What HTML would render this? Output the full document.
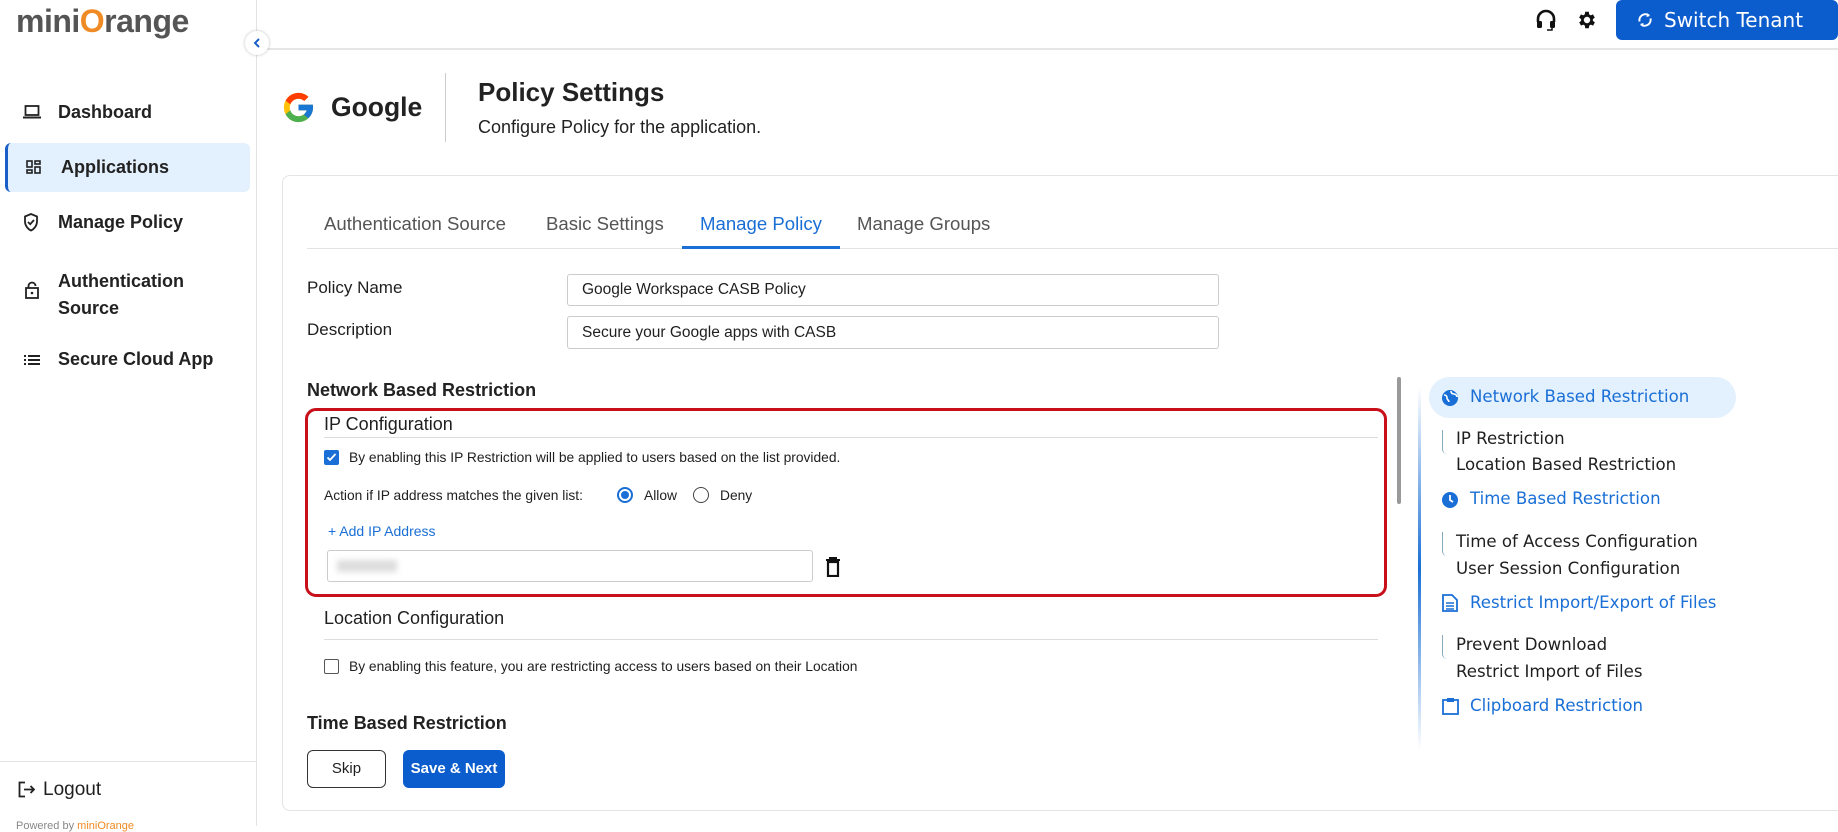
<!DOCTYPE html>
<html><head><meta charset="utf-8"><style>
*{box-sizing:border-box;margin:0;padding:0}
body{width:1838px;height:826px;overflow:hidden;background:#fff;font-family:"Liberation Sans",sans-serif;color:#1f1f1f;position:relative}
.a{position:absolute;white-space:nowrap}
.side{position:absolute;left:0;top:0;width:257px;height:826px;border-right:1px solid #e3e3e3;background:#fff}
.nav{font-size:18px;font-weight:bold;color:#222}
.r{font-family:"DejaVu Sans",sans-serif;font-size:16.6px}
.blue{color:#1a6fd6}
.t{font-size:18.6px;color:#555}
</style></head><body>
<div class="side"></div>
<div class="a" style="left:16px;top:3px;font-size:32px;font-weight:bold;color:#555;letter-spacing:-0.5px">mini<span style="color:#f08a24">O</span>range</div>
<div class="a" style="left:257px;top:48px;width:1581px;height:2px;background:#e6e6e6"></div>
<div class="a" style="left:245px;top:31px;width:24px;height:24px;border-radius:50%;background:#fff;box-shadow:0 0 3px rgba(0,0,0,.25)"></div>
<svg class="a" style="left:251px;top:37px" width="12" height="12" viewBox="0 0 12 12"><path d="M8 2L4 6l4 4" stroke="#1a5fc8" stroke-width="2" fill="none"/></svg>

<svg class="a" style="left:23px;top:105px" width="18" height="14" viewBox="0 0 18 14"><rect x="2.5" y="1" width="13" height="9" fill="none" stroke="#222" stroke-width="1.8"/><path d="M0 12.5h18" stroke="#222" stroke-width="2"/></svg>
<div class="a nav" style="left:58px;top:102px">Dashboard</div>
<div class="a" style="left:5px;top:143px;width:245px;height:49px;background:#e3f0fd;border-left:3px solid #1a5fc8;border-radius:6px"></div>
<svg class="a" style="left:26px;top:160px" width="15" height="16" viewBox="0 0 15 16"><g fill="none" stroke="#222" stroke-width="1.6"><rect x="1" y="1" width="5" height="6"/><rect x="9" y="1" width="5" height="3"/><rect x="1" y="10" width="5" height="3"/><rect x="9" y="7" width="5" height="6"/></g></svg>
<div class="a nav" style="left:61px;top:157px">Applications</div>
<svg class="a" style="left:23px;top:213px" width="16" height="19" viewBox="0 0 16 19"><path d="M8 1L2 3.5v5c0 4 2.7 7.5 6 9 3.3-1.5 6-5 6-9v-5z" fill="none" stroke="#222" stroke-width="1.8"/><path d="M5 9l2.2 2.2L11 7" fill="none" stroke="#222" stroke-width="1.8"/></svg>
<div class="a nav" style="left:58px;top:212px">Manage Policy</div>
<svg class="a" style="left:25px;top:281px" width="14" height="18" viewBox="0 0 14 18"><rect x="1" y="7" width="12" height="10" fill="none" stroke="#222" stroke-width="1.8"/><path d="M3.5 7V5a3.5 3.5 0 017 0" fill="none" stroke="#222" stroke-width="1.8"/><circle cx="7" cy="12" r="1.3" fill="#222"/></svg>
<div class="a nav" style="left:58px;top:268px;line-height:27px">Authentication<br>Source</div>
<svg class="a" style="left:24px;top:354px" width="16" height="12" viewBox="0 0 16 12"><g fill="#222"><rect x="0" y="1" width="2" height="2"/><rect x="0" y="5" width="2" height="2"/><rect x="0" y="9" width="2" height="2"/><rect x="4" y="1" width="12" height="2"/><rect x="4" y="5" width="12" height="2"/><rect x="4" y="9" width="12" height="2"/></g></svg>
<div class="a nav" style="left:58px;top:349px">Secure Cloud App</div>
<div class="a" style="left:0;top:761px;width:257px;height:1px;background:#e3e3e3"></div>
<svg class="a" style="left:18px;top:781px" width="17" height="17" viewBox="0 0 17 17"><path d="M7 1.5H1.5v14H7M6 8.5h10M12.5 5l3.5 3.5-3.5 3.5" fill="none" stroke="#222" stroke-width="1.8"/></svg>
<div class="a" style="left:43px;top:779px;font-size:19px">Logout</div>
<div class="a" style="left:16px;top:820px;font-size:11px;color:#888">Powered by <span style="color:#f08a24">miniOrange</span></div>

<svg class="a" style="left:1535px;top:9px" width="22" height="22" viewBox="0 0 22 22"><path d="M3 13V10a8 8 0 0116 0v3" fill="none" stroke="#111" stroke-width="2.6"/><rect x="2" y="12" width="5" height="7" rx="1.5" fill="#111"/><rect x="15" y="12" width="5" height="7" rx="1.5" fill="#111"/><path d="M17 19v2h-5" stroke="#111" stroke-width="1.5" fill="none"/></svg>
<svg class="a" style="left:1576px;top:9px" width="22" height="22" viewBox="0 0 24 24"><path fill="#111" d="M19.4 13a7.5 7.5 0 000-2l2.1-1.6-2-3.5-2.5 1a7.6 7.6 0 00-1.7-1L15 3h-4l-.4 2.9a7.6 7.6 0 00-1.7 1l-2.5-1-2 3.5L6.6 11a7.5 7.5 0 000 2l-2.1 1.6 2 3.5 2.5-1a7.6 7.6 0 001.7 1L11 21h4l.4-2.9a7.6 7.6 0 001.7-1l2.5 1 2-3.5zM13 15.5a3.5 3.5 0 110-7 3.5 3.5 0 010 7z" transform="translate(-1 0)"/></svg>
<div class="a" style="left:1616px;top:0;width:222px;height:40px;background:#0b5ccc;border-radius:6px;color:#fff;font-family:'DejaVu Sans',sans-serif;font-size:20px;line-height:40px;padding-left:48px">Switch Tenant</div>
<svg class="a" style="left:1636px;top:11px" width="18" height="18" viewBox="0 0 18 18"><path d="M3.5 10.5a6 6 0 019.5-6M14.5 7.5a6 6 0 01-9.5 6" fill="none" stroke="#fff" stroke-width="2"/><path d="M11 2l3 3-3.5 1zM7 16l-3-3 3.5-1z" fill="#fff"/></svg>

<svg class="a" style="left:281px;top:90px" width="35" height="35" viewBox="0 0 48 48"><path fill="#FFC107" d="M43.6 20H24v8h11.3C33.7 32.7 29.2 36 24 36c-6.6 0-12-5.4-12-12s5.4-12 12-12c3.1 0 5.8 1.2 7.9 3.1l5.7-5.7C34 6.1 29.3 4 24 4 13 4 4 13 4 24s9 20 20 20 20-9 20-20c0-1.3-.1-2.7-.4-4z"/><path fill="#FF3D00" d="M6.3 14.7l6.6 4.8C14.7 15.1 19 12 24 12c3.1 0 5.8 1.2 7.9 3.1l5.7-5.7C34 6.1 29.3 4 24 4 16.3 4 9.7 8.3 6.3 14.7z"/><path fill="#4CAF50" d="M24 44c5.2 0 9.9-2 13.4-5.2l-6.2-5.2C29.2 35.1 26.7 36 24 36c-5.2 0-9.6-3.3-11.3-8l-6.5 5C9.5 39.6 16.2 44 24 44z"/><path fill="#1976D2" d="M43.6 20H24v8h11.3c-.8 2.2-2.2 4.2-4.1 5.6l6.2 5.2C37 39.2 44 34 44 24c0-1.3-.1-2.7-.4-4z"/></svg>
<div class="a" style="left:331px;top:92px;font-size:26.5px;font-weight:bold;color:#222">Google</div>
<div class="a" style="left:445px;top:73px;width:1px;height:69px;background:#ccc"></div>
<div class="a" style="left:478px;top:77px;font-size:26px;font-weight:bold;color:#222">Policy Settings</div>
<div class="a" style="left:478px;top:117px;font-size:18px;color:#222">Configure Policy for the application.</div>

<div class="a" style="left:282px;top:175px;width:1570px;height:636px;border:1px solid #e4e4e4;border-radius:8px"></div>
<div class="a t" style="left:324px;top:213px">Authentication Source</div>
<div class="a t" style="left:546px;top:213px">Basic Settings</div>
<div class="a t" style="left:700px;top:213px;color:#1a6fd6">Manage Policy</div>
<div class="a t" style="left:857px;top:213px">Manage Groups</div>
<div class="a" style="left:307px;top:248px;width:1531px;height:1px;background:#e3e3e3"></div>
<div class="a" style="left:682px;top:246px;width:158px;height:3px;background:#1a6fd6"></div>

<div class="a" style="left:307px;top:278px;font-size:17px">Policy Name</div>
<div class="a" style="left:567px;top:274px;width:652px;height:32px;border:1px solid #ccc;border-radius:3px;font-size:15.5px;line-height:30px;padding-left:14px">Google Workspace CASB Policy</div>
<div class="a" style="left:307px;top:320px;font-size:17px">Description</div>
<div class="a" style="left:567px;top:316px;width:652px;height:33px;border:1px solid #ccc;border-radius:3px;font-size:15.5px;line-height:31px;padding-left:14px">Secure your Google apps with CASB</div>

<div class="a" style="left:307px;top:380px;font-size:18px;font-weight:bold;color:#222">Network Based Restriction</div>
<div class="a" style="left:305px;top:408px;width:1082px;height:189px;border:3px solid #c8101a;border-radius:11px"></div>
<div class="a" style="left:324px;top:414px;font-size:18px">IP Configuration</div>
<div class="a" style="left:324px;top:437px;width:1054px;height:1px;background:#ddd"></div>
<div class="a" style="left:324px;top:450px;width:15px;height:15px;background:#1a6fd6;border-radius:2px"></div>
<svg class="a" style="left:326px;top:452px" width="11" height="11" viewBox="0 0 11 11"><path d="M1.5 5.5l2.5 2.5 5.5-6" stroke="#fff" stroke-width="1.8" fill="none"/></svg>
<div class="a" style="left:349px;top:450px;font-size:13.8px">By enabling this IP Restriction will be applied to users based on the list provided.</div>
<div class="a" style="left:324px;top:488px;font-size:13.8px">Action if IP address matches the given list:</div>
<div class="a" style="left:617px;top:487px;width:16px;height:16px;border:2px solid #1a6fd6;border-radius:50%"></div>
<div class="a" style="left:621px;top:491px;width:8px;height:8px;background:#1a6fd6;border-radius:50%"></div>
<div class="a" style="left:644px;top:488px;font-size:13.8px">Allow</div>
<div class="a" style="left:693px;top:487px;width:16px;height:16px;border:1.5px solid #444;border-radius:50%"></div>
<div class="a" style="left:720px;top:488px;font-size:13.8px">Deny</div>
<div class="a" style="left:328px;top:523px;font-size:14px;color:#1a6fd6">+ Add IP Address</div>
<div class="a" style="left:327px;top:550px;width:486px;height:32px;border:1px solid #ccc;border-radius:3px"></div>
<div class="a" style="left:337px;top:560px;width:60px;height:12px;background:#ddd;filter:blur(3px)"></div>
<svg class="a" style="left:825px;top:557px" width="16" height="20" viewBox="0 0 16 20"><path d="M1 3h14M5 3V1h6v2" stroke="#111" stroke-width="2" fill="none"/><rect x="3" y="5" width="10" height="14" fill="none" stroke="#111" stroke-width="2.2"/></svg>

<div class="a" style="left:324px;top:608px;font-size:18px">Location Configuration</div>
<div class="a" style="left:324px;top:639px;width:1054px;height:1px;background:#ddd"></div>
<div class="a" style="left:324px;top:659px;width:15px;height:15px;border:1.5px solid #555;border-radius:2px"></div>
<div class="a" style="left:349px;top:659px;font-size:13.8px">By enabling this feature, you are restricting access to users based on their Location</div>
<div class="a" style="left:307px;top:713px;font-size:18px;font-weight:bold;color:#222">Time Based Restriction</div>
<div class="a" style="left:307px;top:750px;width:79px;height:38px;border:1.5px solid #333;border-radius:6px;text-align:center;line-height:35px;font-size:15px">Skip</div>
<div class="a" style="left:403px;top:750px;width:102px;height:38px;background:#0b5ccc;border-radius:6px;text-align:center;line-height:38px;font-size:15px;font-weight:bold;color:#fff">Save &amp; Next</div>

<div class="a" style="left:1397px;top:377px;width:4px;height:127px;background:#999;border-radius:2px"></div>

<div class="a" style="left:1418px;top:387px;width:3px;height:363px;background:linear-gradient(#fff,#1a6fd6 50%,#fff)"></div>
<div class="a" style="left:1429px;top:377px;width:307px;height:41px;background:#e3f0fd;border-radius:21px"></div>
<svg class="a" style="left:1441px;top:389px" width="18" height="18" viewBox="0 0 18 18"><circle cx="9" cy="9" r="8" fill="#1a6fd6"/><path d="M3 6c2 0 3 1 3 3s2 2 2 4M10 2c0 2 1 3 3 3s3 2 3 3" stroke="#fff" stroke-width="1.6" fill="none"/></svg>
<div class="a r blue" style="left:1470px;top:387px">Network Based Restriction</div>
<div class="a" style="left:1442px;top:430px;width:5px;height:24px;border-left:1px solid #8ab;border-bottom-left-radius:5px"></div>
<div class="a r" style="left:1456px;top:429px">IP Restriction</div>
<div class="a r" style="left:1456px;top:455px">Location Based Restriction</div>
<svg class="a" style="left:1441px;top:491px" width="18" height="18" viewBox="0 0 18 18"><circle cx="9" cy="9" r="8" fill="#1a6fd6"/><path d="M9 4v5l3 2" stroke="#fff" stroke-width="1.8" fill="none"/></svg>
<div class="a r blue" style="left:1470px;top:489px">Time Based Restriction</div>
<div class="a" style="left:1442px;top:532px;width:5px;height:24px;border-left:1px solid #8ab;border-bottom-left-radius:5px"></div>
<div class="a r" style="left:1456px;top:532px">Time of Access Configuration</div>
<div class="a r" style="left:1456px;top:559px">User Session Configuration</div>
<svg class="a" style="left:1442px;top:594px" width="16" height="18" viewBox="0 0 16 18"><path d="M1 1h9l5 5v11H1z" fill="none" stroke="#1a6fd6" stroke-width="1.8"/><path d="M4 9h8M4 12h8M4 15h8" stroke="#1a6fd6" stroke-width="1.5"/></svg>
<div class="a r blue" style="left:1470px;top:593px">Restrict Import/Export of Files</div>
<div class="a" style="left:1442px;top:635px;width:5px;height:24px;border-left:1px solid #8ab;border-bottom-left-radius:5px"></div>
<div class="a r" style="left:1456px;top:635px">Prevent Download</div>
<div class="a r" style="left:1456px;top:662px">Restrict Import of Files</div>
<svg class="a" style="left:1442px;top:697px" width="17" height="18" viewBox="0 0 17 18"><rect x="1" y="3" width="15" height="14" fill="none" stroke="#1a6fd6" stroke-width="1.8"/><rect x="5" y="1" width="7" height="4" fill="#1a6fd6"/></svg>
<div class="a r blue" style="left:1470px;top:696px">Clipboard Restriction</div>
</body></html>
